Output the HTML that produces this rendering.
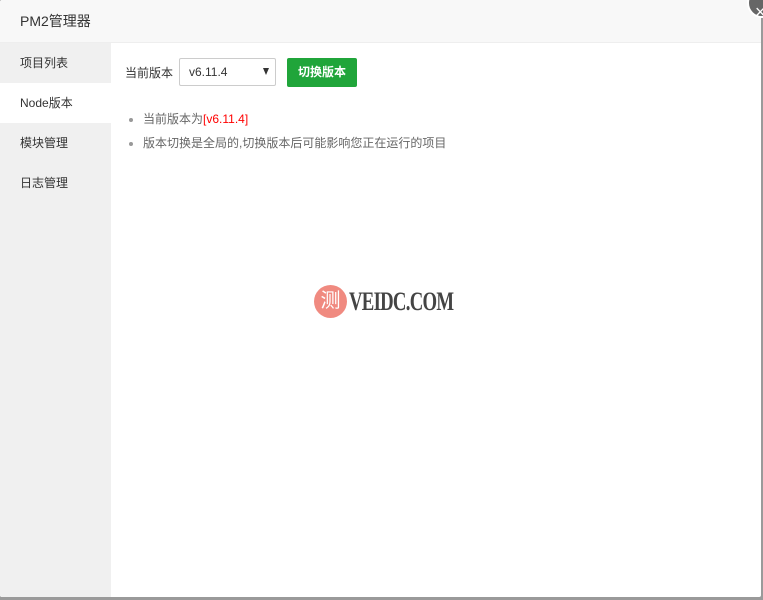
<!DOCTYPE html>
<html><head><meta charset="utf-8"><style>
body{margin:0;width:763px;height:600px;background:#9a9a9a;position:relative;overflow:hidden;font-family:"Liberation Sans","Noto Sans CJK SC",sans-serif;}
.dlg{position:absolute;left:0;top:0;width:761px;height:597px;background:#fff;border-radius:2px;overflow:hidden}
.hd{height:42px;background:#f8f8f8;border-bottom:1px solid #eee;line-height:42px;padding-left:20px;font-size:14px;color:#333}
.side{position:absolute;left:0;top:43px;width:111px;bottom:0;background:#f0f0f0}
.side div{height:40px;line-height:40px;padding-left:20px;font-size:12px;color:#333}
.side .on{background:#fff}
.main{position:absolute;left:111px;top:43px;right:0;bottom:0}
.lbl{position:absolute;left:14px;top:16px;line-height:28px;font-size:12px;color:#333}
.sel{position:absolute;left:68px;top:15px;width:97px;height:28px;border:1px solid #ccc;border-radius:2px;box-sizing:border-box;font-size:12px;line-height:26px;padding-left:9px;color:#333}
.sel:after{content:"";position:absolute;right:6px;top:9px;border:3px solid transparent;border-top:7px solid #333}
.btn{position:absolute;left:176px;top:15px;width:70px;height:29px;background:#20a53a;border-radius:2px;color:#fff;font-size:12px;line-height:29px;text-align:center;font-weight:bold}
ul{position:absolute;left:14px;top:64px;margin:0;padding:0 0 0 18px;font-size:12px;color:#666;line-height:24px}
li::marker{color:#999}
.red{color:#f00}
.logo{position:absolute;left:314px;top:285px;display:flex;align-items:center}
.c{width:33px;height:33px;border-radius:50%;background:#f08a80;color:#fff;font-size:20px;text-align:center;line-height:33px}
.t{font-family:"Liberation Serif",serif;font-weight:bold;font-size:26px;color:#444;margin-left:2px;letter-spacing:-1px;transform:scaleX(.72);transform-origin:left}
.x{position:absolute;left:747px;top:-12px;width:30px;height:30px;border-radius:50%;background:#666;border:2px solid #fff;color:#fff;font-size:18px;line-height:44px;text-align:left;padding-left:6px;box-sizing:border-box}
</style></head><body>
<div class="dlg">
<div class="hd">PM2管理器</div>
<div class="side"><div>项目列表</div><div class="on">Node版本</div><div>模块管理</div><div>日志管理</div></div>
<div class="main">
<div class="lbl">当前版本</div>
<div class="sel">v6.11.4</div>
<div class="btn">切换版本</div>
<ul><li>当前版本为<span class="red">[v6.11.4]</span></li><li>版本切换是全局的,切换版本后可能影响您正在运行的项目</li></ul>
</div>
<div class="logo"><div class="c">测</div><div class="t">VEIDC.COM</div></div>
</div>
<div class="x">×</div>
</body></html>
